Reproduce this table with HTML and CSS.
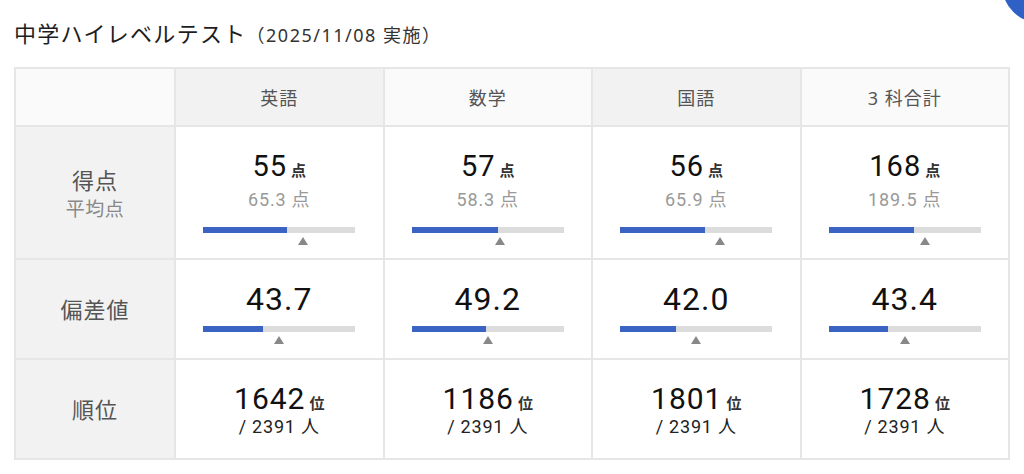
FILE: index.html
```html
<!DOCTYPE html>
<html lang="ja">
<head>
<meta charset="utf-8">
<link rel="stylesheet" href="styles.css">
</head>
<body>
<div class="fab"></div>
<div class="page">
  <h1 class="title">中学ハイレベルテスト<span class="date">（2025/11/08 実施）</span></h1>
  <div class="grid">
    <div class="head corner"></div>
    <div class="head dark">英語</div>
    <div class="head">数学</div>
    <div class="head dark">国語</div>
    <div class="head">3 科合計</div>

    <div class="label"><div class="l-main">得点</div><div class="l-sub">平均点</div></div>
    <div class="cell score">
      <div class="main"><span class="num">55</span><span class="unit">点</span></div>
      <div class="avg">65.3 点</div>
      <div class="gauge"><div class="track"><div class="fill" style="width:55%"></div></div><div class="mark" style="left:65.3%"></div></div>
    </div>
    <div class="cell score">
      <div class="main"><span class="num">57</span><span class="unit">点</span></div>
      <div class="avg">58.3 点</div>
      <div class="gauge"><div class="track"><div class="fill" style="width:57%"></div></div><div class="mark" style="left:58.3%"></div></div>
    </div>
    <div class="cell score">
      <div class="main"><span class="num">56</span><span class="unit">点</span></div>
      <div class="avg">65.9 点</div>
      <div class="gauge"><div class="track"><div class="fill" style="width:56%"></div></div><div class="mark" style="left:65.9%"></div></div>
    </div>
    <div class="cell score">
      <div class="main"><span class="num">168</span><span class="unit">点</span></div>
      <div class="avg">189.5 点</div>
      <div class="gauge"><div class="track"><div class="fill" style="width:56%"></div></div><div class="mark" style="left:63.17%"></div></div>
    </div>

    <div class="label"><div class="l-main">偏差値</div></div>
    <div class="cell dev">
      <div class="main"><span class="num big">43.7</span></div>
      <div class="gauge"><div class="track"><div class="fill" style="width:39.5%"></div></div><div class="mark" style="left:50%"></div></div>
    </div>
    <div class="cell dev">
      <div class="main"><span class="num big">49.2</span></div>
      <div class="gauge"><div class="track"><div class="fill" style="width:48.67%"></div></div><div class="mark" style="left:50%"></div></div>
    </div>
    <div class="cell dev">
      <div class="main"><span class="num big">42.0</span></div>
      <div class="gauge"><div class="track"><div class="fill" style="width:36.67%"></div></div><div class="mark" style="left:50%"></div></div>
    </div>
    <div class="cell dev">
      <div class="main"><span class="num big">43.4</span></div>
      <div class="gauge"><div class="track"><div class="fill" style="width:39%"></div></div><div class="mark" style="left:50%"></div></div>
    </div>

    <div class="label"><div class="l-main">順位</div></div>
    <div class="cell rank">
      <div class="main"><span class="num">1642</span><span class="unit">位</span></div>
      <div class="total">/ 2391 人</div>
    </div>
    <div class="cell rank">
      <div class="main"><span class="num">1186</span><span class="unit">位</span></div>
      <div class="total">/ 2391 人</div>
    </div>
    <div class="cell rank">
      <div class="main"><span class="num">1801</span><span class="unit">位</span></div>
      <div class="total">/ 2391 人</div>
    </div>
    <div class="cell rank">
      <div class="main"><span class="num">1728</span><span class="unit">位</span></div>
      <div class="total">/ 2391 人</div>
    </div>
  </div>
</div>
</body>
</html>
```

FILE: styles.css
```css
* { box-sizing: border-box; }
html, body { margin: 0; padding: 0; background: #fff; }
body {
  font-family: "Noto Sans", "Noto Sans CJK JP", sans-serif;
  color: #222;
  overflow: hidden;
}
.fab {
  position: absolute;
  right: -54px;
  top: -53px;
  width: 76px;
  height: 76px;
  border-radius: 50%;
  background: #2f60c6;
}
.page {
  padding: 18px 0 0 14px;
}
.title {
  margin: 0 0 19px;
  height: 30px;
  font-size: 22px;
  line-height: 30px;
  font-weight: 400;
  letter-spacing: 1.3px;
  color: #1e1e1e;
}
.date {
  font-size: 18px;
  line-height: 1;
  letter-spacing: 1.5px;
  color: #333;
  margin-left: 0;
}
.grid {
  display: grid;
  width: 996px;
  grid-template-columns: 158px repeat(4, 1fr);
  grid-template-rows: 56px 131px 98px 98px;
  gap: 2px;
  padding: 2px;
  background: #e6e6e6;
}
.head {
  display: flex;
  align-items: center;
  justify-content: center;
  background: #fafafa;
  font-size: 18px;
  letter-spacing: 1px;
  color: #555;
}
.head.dark { background: #f2f2f2; }
.label {
  display: flex;
  flex-direction: column;
  align-items: center;
  justify-content: center;
  background: #f2f2f2;
  color: #555;
}
.l-main {
  font-size: 22px;
  line-height: 30px;
  letter-spacing: 1px;
}
.l-sub {
  margin-top: 2px;
  font-size: 19px;
  line-height: 24px;
  letter-spacing: 0.5px;
  color: #888;
}
.cell {
  display: flex;
  flex-direction: column;
  align-items: center;
  justify-content: center;
  background: #fff;
}
.main {
  display: flex;
  align-items: baseline;
  color: #111;
}
.num {
  font-family: Roboto, "Noto Sans", sans-serif;
  font-size: 29px;
  line-height: 35px;
  letter-spacing: 1px;
}
.num.big {
  font-size: 32px;
  line-height: 38px;
}
.unit {
  font-size: 15px;
  font-weight: 700;
  color: #333;
  margin-left: 4px;
}
.score { padding-top: 9px; }
.avg {
  margin-top: 5px;
  font-family: Roboto, "Noto Sans CJK JP", sans-serif;
  font-size: 18px;
  line-height: 22px;
  letter-spacing: 0.8px;
  color: #999;
}
.gauge {
  position: relative;
  width: 152px;
  height: 18px;
  margin-top: 16px;
}
.dev { padding-top: 6px; }
.dev .gauge { margin-top: 8px; }
.track {
  height: 6px;
  background: #dcdcdc;
}
.fill {
  height: 100%;
  background: #3a63c4;
}
.mark {
  position: absolute;
  top: 10px;
  width: 0;
  height: 0;
  margin-left: -5px;
  border-left: 5px solid transparent;
  border-right: 5px solid transparent;
  border-bottom: 8px solid #888;
}
.rank .num { font-size: 30px; line-height: 35px; }
.total {
  font-family: Roboto, "Noto Sans CJK JP", sans-serif;
  font-size: 18px;
  line-height: 22px;
  letter-spacing: 0.8px;
  color: #222;
}
```
